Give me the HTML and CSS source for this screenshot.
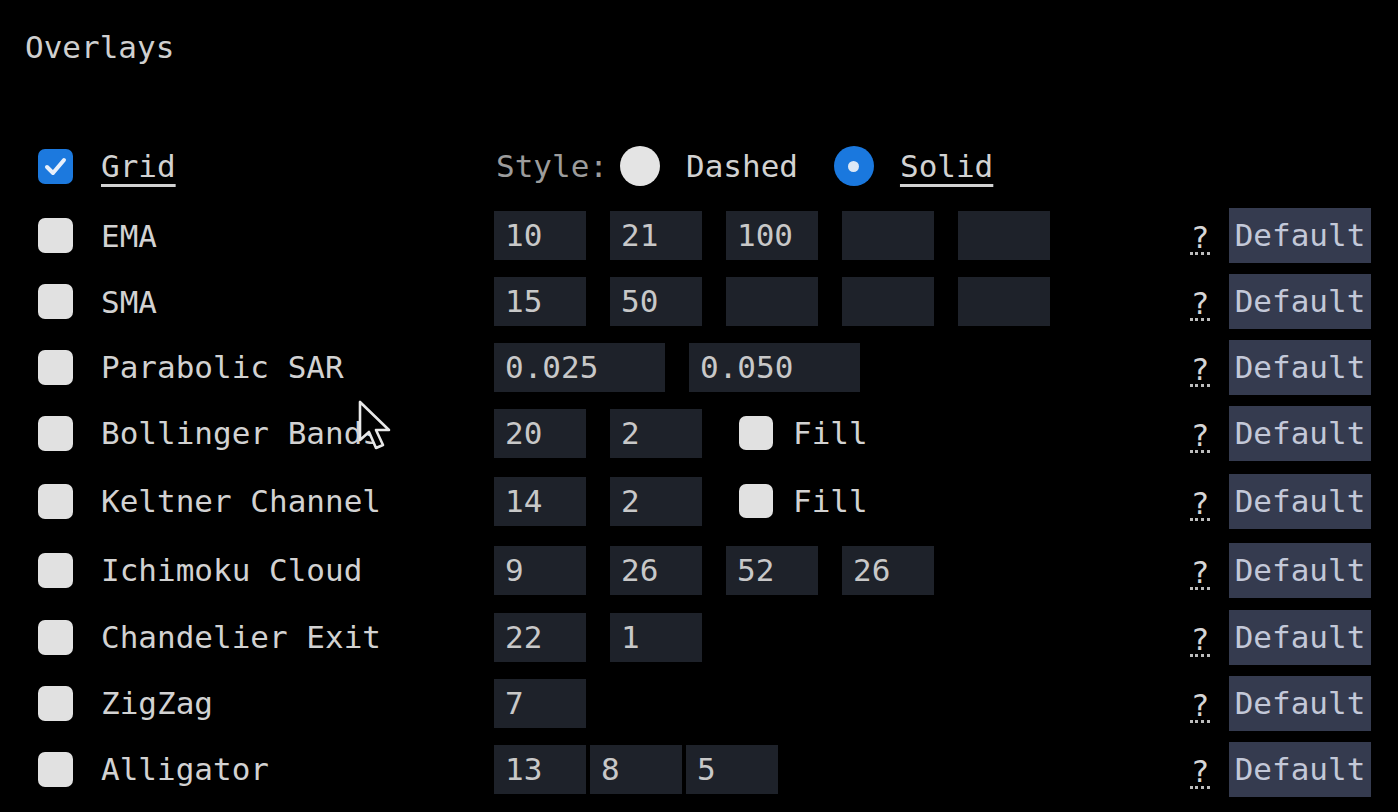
FILE: index.html
```html
<!DOCTYPE html>
<html>
<head>
<meta charset="utf-8">
<link rel="stylesheet" href="styles.css">
</head>
<body>
<div class="panel">
  <div class="title">Overlays</div>
  <div class="rows">
    <div class="row row-grid">
      <span class="cb checked"><svg viewBox="0 0 35 35" width="35" height="35"><polyline points="9,18 15,24 26,11" fill="none" stroke="#e8f0fb" stroke-width="4" stroke-linecap="round" stroke-linejoin="round"/></svg></span>
      <span class="label"><span class="ul">Grid</span></span>
      <div class="params">
        <span class="style-lbl">Style:</span>
        <span class="radio"></span>
        <span class="opt">Dashed</span>
        <span class="radio on"><span class="dot"></span></span>
        <span class="opt"><span class="ul">Solid</span></span>
      </div>
    </div>
    <div class="row r-67">
      <span class="cb"></span><span class="label">EMA</span>
      <div class="params"><span class="in">10</span><span class="in">21</span><span class="in">100</span><span class="in"></span><span class="in"></span></div>
      <span class="help">?</span><span class="btn">Default</span>
    </div>
    <div class="row r-65">
      <span class="cb"></span><span class="label">SMA</span>
      <div class="params"><span class="in">15</span><span class="in">50</span><span class="in"></span><span class="in"></span><span class="in"></span></div>
      <span class="help">?</span><span class="btn">Default</span>
    </div>
    <div class="row">
      <span class="cb"></span><span class="label">Parabolic SAR</span>
      <div class="params"><span class="in wide">0.025</span><span class="in wide">0.050</span></div>
      <span class="help">?</span><span class="btn">Default</span>
    </div>
    <div class="row">
      <span class="cb"></span><span class="label">Bollinger Bands</span>
      <div class="params"><span class="in">20</span><span class="in">2</span><span class="cb small"></span><span class="fill">Fill</span></div>
      <span class="help">?</span><span class="btn">Default</span>
    </div>
    <div class="row r-70">
      <span class="cb"></span><span class="label">Keltner Channel</span>
      <div class="params"><span class="in">14</span><span class="in">2</span><span class="cb small"></span><span class="fill">Fill</span></div>
      <span class="help">?</span><span class="btn">Default</span>
    </div>
    <div class="row r-68">
      <span class="cb"></span><span class="label">Ichimoku Cloud</span>
      <div class="params"><span class="in">9</span><span class="in">26</span><span class="in">52</span><span class="in">26</span></div>
      <span class="help">?</span><span class="btn">Default</span>
    </div>
    <div class="row">
      <span class="cb"></span><span class="label">Chandelier Exit</span>
      <div class="params"><span class="in">22</span><span class="in">1</span></div>
      <span class="help">?</span><span class="btn">Default</span>
    </div>
    <div class="row">
      <span class="cb"></span><span class="label">ZigZag</span>
      <div class="params"><span class="in">7</span></div>
      <span class="help">?</span><span class="btn">Default</span>
    </div>
    <div class="row">
      <span class="cb"></span><span class="label">Alligator</span>
      <div class="params tight"><span class="in">13</span><span class="in">8</span><span class="in">5</span></div>
      <span class="help">?</span><span class="btn">Default</span>
    </div>
  </div>
  <svg class="cursor" viewBox="0 0 36 54" width="36" height="54"><path d="M2,2 L2,40 L11,32 L18,48 L25,45 L18,30 L31,30 Z" fill="#000" stroke="#e8e8e8" stroke-width="2.6" stroke-linejoin="round"/></svg>
</div>
</body>
</html>
```

FILE: styles.css
```css
html, body {
  margin: 0;
  padding: 0;
  background: #000;
}
body {
  font-family: "DejaVu Sans Mono", "Liberation Mono", monospace;
  font-size: 31px;
  color: #d2d2d2;
}
.panel {
  position: relative;
  width: 1398px;
  height: 812px;
  overflow: hidden;
}
.title {
  padding: 29px 0 0 25px;
  line-height: 36px;
  height: 36px;
  color: #cfcfcf;
}
.rows {
  margin-top: 65px;
}
.row {
  display: flex;
  align-items: center;
  height: 66px;
}
.row-grid {
  height: 72px;
}
.row.r-67 { height: 67px; }
.row.r-65 { height: 65px; }
.row.r-70 { height: 70px; }
.row.r-68 { height: 68px; }
.cb {
  flex: none;
  width: 35px;
  height: 35px;
  margin-left: 38px;
  border-radius: 7px;
  background: #e1e1e1;
  display: flex;
}
.cb.checked {
  background: #1c79de;
}
.cb.small {
  margin-left: 13px;
  margin-right: -4px;
  width: 34px;
  height: 34px;
}
.label {
  flex: none;
  width: 393px;
  margin-left: 28px;
  white-space: nowrap;
}
.ul {
  text-decoration: underline;
  text-decoration-thickness: 3px;
  text-underline-offset: 7px;
}
.params {
  flex: none;
  width: 696px;
  display: flex;
  align-items: center;
  gap: 24px;
}
.params.tight {
  gap: 4px;
}
.style-lbl {
  color: #9c9c9c;
  margin-left: 2px;
}
.radio {
  width: 40px;
  height: 40px;
  border-radius: 50%;
  background: #e4e4e4;
  margin-left: -12px;
  display: flex;
  align-items: center;
  justify-content: center;
}
.radio.on {
  background: #1a78de;
  margin-left: 12px;
}
.radio .dot {
  width: 11px;
  height: 11px;
  border-radius: 50%;
  background: #dce8f6;
}
.opt {
  margin-left: 2px;
}
.in {
  width: 81px;
  height: 49px;
  padding-left: 11px;
  background: #1e222a;
  color: #c8c8c8;
  line-height: 49px;
  box-sizing: content-box;
}
.in.wide {
  width: 160px;
}
.fill {
  color: #d2d2d2;
}
.help {
  width: 20px;
  text-align: center;
  line-height: 30px;
  color: #d6d6d6;
  border-bottom: 3px dotted #bdbdbd;
  margin-top: 6px;
}
.btn {
  margin-left: 19px;
  width: 142px;
  height: 55px;
  line-height: 55px;
  text-align: center;
  background: #353b4f;
  color: #c3c8d8;
}
.cursor {
  position: absolute;
  left: 358px;
  top: 400px;
}
```
